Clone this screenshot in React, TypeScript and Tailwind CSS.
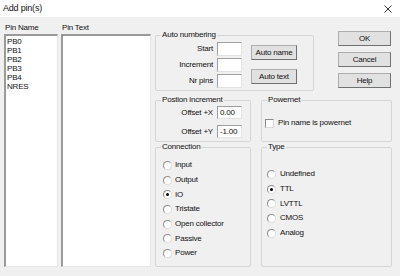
import React from 'react';

type GroupProps = {
  title: string;
  className?: string;
  children?: React.ReactNode;
};

const Group: React.FC<GroupProps> = ({ title, className = '', children }) => {
  return (
    <fieldset className={`border border-[#d5d5d5] rounded-[2px] ${className}`}>
      <legend className="ml-[5px] px-[1px] leading-[10px]">{title}</legend>
      {children}
    </fieldset>
  );
};

const Field: React.FC<{ value?: string; h?: string }> = ({ value = '', h = 'h-[14px]' }) => (
  <div
    className={`w-[25px] ${h} bg-white border border-[#a0a0a0] border-b-[#e3e3e3] border-r-[#e3e3e3] pl-[2px] flex items-center`}
  >
    {value}
  </div>
);

const Btn: React.FC<{ label: string; className?: string }> = ({ label, className = '' }) => (
  <button
    className={`h-[15px] bg-[#e1e1e1] border border-[#adadad] border-b-[#707070] border-r-[#707070] flex items-center justify-center leading-none whitespace-nowrap ${className}`}
  >
    {label}
  </button>
);

const Radio: React.FC<{ label: string; checked?: boolean; gap?: string }> = ({ label, checked, gap = 'ml-[3px]' }) => (
  <div className="flex items-center h-[14.7px]">
    <span className="w-[9px] h-[9px] rounded-full border border-[#8c8c8c] border-b-[#dcdcdc] border-r-[#dcdcdc] bg-white flex items-center justify-center">
      {checked && <span className="w-[3px] h-[3px] rounded-full bg-black" />}
    </span>
    <span className={gap}>{label}</span>
  </div>
);

const ListBox: React.FC<{ items?: string[]; className?: string }> = ({ items = [], className = '' }) => (
  <div
    className={`flex-1 bg-white border-l-2 border-t-2 border-l-[#9a9a9a] border-t-[#9a9a9a] border-r border-b border-r-[#e6e6e6] border-b-[#e6e6e6] pt-[1px] pl-[1px] ${className}`}
  >
    {items.map((it) => (
      <div key={it} className="leading-[9px] h-[9px]">
        {it}
      </div>
    ))}
  </div>
);

export default function App() {
  const pins = ['PB0', 'PB1', 'PB2', 'PB3', 'PB4', 'NRES'];

  return (
    <div className="w-[400px] h-[276px] flex flex-col bg-[#f0f0f0] text-[#111] text-[8px] tracking-[-0.2px] font-['Liberation_Sans',Arial,sans-serif] overflow-hidden">
      {/* title bar */}
      <div className="h-[18px] bg-white flex items-center justify-between pl-[3px] pr-[8px]">
        <span className="text-[9px]">Add pin(s)</span>
        <svg width="8" height="8" viewBox="0 0 8 8">
          <path d="M0.5 0.5 L7.5 7.5 M7.5 0.5 L0.5 7.5" stroke="#333" strokeWidth="1" />
        </svg>
      </div>

      <div className="flex-1 flex pl-[4px] pt-[5px] pb-[9px]">
        {/* Pin name */}
        <div className="w-[54px] flex flex-col">
          <div className="h-[12px] leading-[11px] pl-[1px]">Pin Name</div>
          <ListBox items={pins} />
        </div>

        {/* Pin text */}
        <div className="w-[90px] ml-[3px] flex flex-col">
          <div className="h-[12px] leading-[11px] pl-[1px]">Pin Text</div>
          <ListBox />
        </div>

        {/* right side */}
        <div className="w-[237px] ml-[4px] mt-[8px] flex flex-col">
          <div className="flex">
            <Group title="Auto numbering" className="w-[159px] h-[61px]">
              <div className="flex pt-[2px]">
                <div className="flex flex-col gap-[2px]">
                  {['Start', 'Increment', 'Nr pins'].map((l) => (
                    <div key={l} className="flex items-center">
                      <span className="w-[57px] text-right">{l}</span>
                      <span className="ml-[4px]">
                        <Field />
                      </span>
                    </div>
                  ))}
                </div>
                <div className="ml-[9px] mt-[3px] flex flex-col gap-[9px]">
                  <Btn label="Auto name" className="w-[46px]" />
                  <Btn label="Auto text" className="w-[46px]" />
                </div>
              </div>
            </Group>
            <div className="ml-[24px] mt-[1px] flex flex-col gap-[6px]">
              <Btn label="OK" className="w-[53px]" />
              <Btn label="Cancel" className="w-[53px]" />
              <Btn label="Help" className="w-[53px]" />
            </div>
          </div>

          <div className="flex mt-[4px]">
            <Group title="Postion increment" className="w-[96px] h-[47px]">
              <div className="flex flex-col gap-[6px] pt-[1px]">
                <div className="flex items-center">
                  <span className="w-[57px] text-right">Offset +X</span>
                  <span className="ml-[4px]">
                    <Field value="0.00" h="h-[13px]" />
                  </span>
                </div>
                <div className="flex items-center">
                  <span className="w-[57px] text-right">Offset +Y</span>
                  <span className="ml-[4px]">
                    <Field value="-1.00" h="h-[13px]" />
                  </span>
                </div>
              </div>
            </Group>
            <Group title="Powernet" className="w-[131px] h-[47px] ml-[10px]">
              <div className="flex items-center pt-[12px] pl-[3px]">
                <span className="w-[9px] h-[9px] bg-white border border-[#8c8c8c] border-b-[#dcdcdc] border-r-[#dcdcdc]" />
                <span className="ml-[4px]">Pin name is powernet</span>
              </div>
            </Group>
          </div>

          <div className="flex">
            <Group title="Connection" className="w-[96px] h-[125px]">
              <div className="flex flex-col pt-[6px] pl-[7px]">
                <Radio label="Input" />
                <Radio label="Output" />
                <Radio label="IO" checked />
                <Radio label="Tristate" />
                <Radio label="Open collector" />
                <Radio label="Passive" />
                <Radio label="Power" />
              </div>
            </Group>
            <Group title="Type" className="w-[131px] h-[125px] ml-[10px]">
              <div className="flex flex-col pt-[15px] pl-[5px]">
                <Radio label="Undefined" gap="ml-[4px]" />
                <Radio label="TTL" checked gap="ml-[4px]" />
                <Radio label="LVTTL" gap="ml-[4px]" />
                <Radio label="CMOS" gap="ml-[4px]" />
                <Radio label="Analog" gap="ml-[4px]" />
              </div>
            </Group>
          </div>
        </div>
      </div>
    </div>
  );
}
